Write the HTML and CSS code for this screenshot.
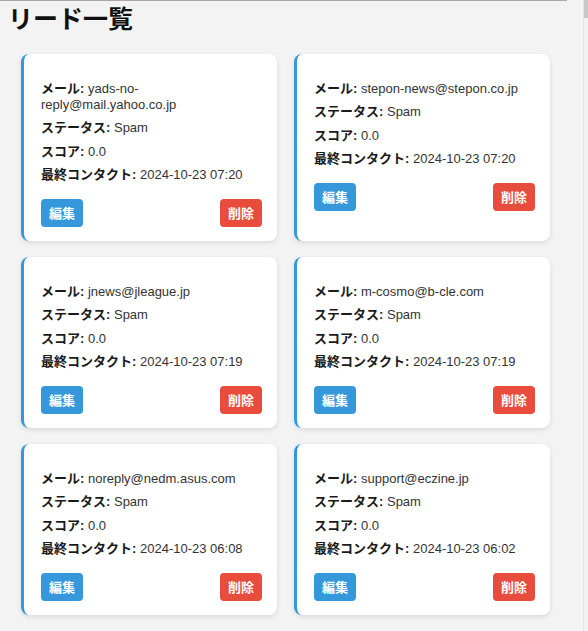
FILE: index.html
```html
<!DOCTYPE html>
<html lang="ja">
<head>
<meta charset="utf-8">
<title>リード一覧</title>
<link rel="stylesheet" href="styles.css">
</head>
<body>
<div class="page">
  <main class="main">
    <div class="top-rule"></div>
    <h1 class="title">リード一覧</h1>
    <div class="grid">
      <div class="card">
        <p><span class="label">メール:</span> yads-no-reply@mail.yahoo.co.jp</p>
        <p><span class="label">ステータス:</span> Spam</p>
        <p><span class="label">スコア:</span> 0.0</p>
        <p><span class="label">最終コンタクト:</span> 2024-10-23 07:20</p>
        <div class="actions"><button class="btn edit">編集</button><button class="btn del">削除</button></div>
      </div>
      <div class="card">
        <p><span class="label">メール:</span> stepon-news@stepon.co.jp</p>
        <p><span class="label">ステータス:</span> Spam</p>
        <p><span class="label">スコア:</span> 0.0</p>
        <p><span class="label">最終コンタクト:</span> 2024-10-23 07:20</p>
        <div class="actions"><button class="btn edit">編集</button><button class="btn del">削除</button></div>
      </div>
      <div class="card">
        <p><span class="label">メール:</span> jnews@jleague.jp</p>
        <p><span class="label">ステータス:</span> Spam</p>
        <p><span class="label">スコア:</span> 0.0</p>
        <p><span class="label">最終コンタクト:</span> 2024-10-23 07:19</p>
        <div class="actions"><button class="btn edit">編集</button><button class="btn del">削除</button></div>
      </div>
      <div class="card">
        <p><span class="label">メール:</span> m-cosmo@b-cle.com</p>
        <p><span class="label">ステータス:</span> Spam</p>
        <p><span class="label">スコア:</span> 0.0</p>
        <p><span class="label">最終コンタクト:</span> 2024-10-23 07:19</p>
        <div class="actions"><button class="btn edit">編集</button><button class="btn del">削除</button></div>
      </div>
      <div class="card">
        <p><span class="label">メール:</span> noreply@nedm.asus.com</p>
        <p><span class="label">ステータス:</span> Spam</p>
        <p><span class="label">スコア:</span> 0.0</p>
        <p><span class="label">最終コンタクト:</span> 2024-10-23 06:08</p>
        <div class="actions"><button class="btn edit">編集</button><button class="btn del">削除</button></div>
      </div>
      <div class="card">
        <p><span class="label">メール:</span> support@eczine.jp</p>
        <p><span class="label">ステータス:</span> Spam</p>
        <p><span class="label">スコア:</span> 0.0</p>
        <p><span class="label">最終コンタクト:</span> 2024-10-23 06:02</p>
        <div class="actions"><button class="btn edit">編集</button><button class="btn del">削除</button></div>
      </div>
    </div>
  </main>
  <div class="scrollbar"><div class="thumb"></div></div>
</div>
</body>
</html>
```

FILE: styles.css
```css
html, body {
  margin: 0;
  padding: 0;
  height: 100%;
  overflow: hidden;
  background: #f3f3f3;
}
body {
  font-family: "Liberation Sans", Arial, "Noto Sans CJK JP", sans-serif;
  color: #333;
}
.page {
  display: flex;
  height: 631px;
}
.main {
  flex: 1;
  min-width: 0;
}
.top-rule {
  width: 567px;
  height: 1px;
  background: #a9a9a9;
}
.title {
  margin: 0 0 0 8px;
  font-family: "Noto Sans CJK JP", sans-serif;
  font-size: 25px;
  font-weight: 700;
  line-height: 32px;
  color: #111;
}
.grid {
  display: grid;
  grid-template-columns: 1fr 1fr;
  gap: 16px 17px;
  margin: 21px 0 0 21px;
  width: 529px;
}
.card {
  background: #fff;
  border-left: 3px solid #3498db;
  border-radius: 8px;
  box-shadow: 0 2px 5px rgba(0, 0, 0, 0.1);
  padding: 19px 15px 14px 17px;
}
.card p {
  margin: 7.5px 0;
  font-size: 13px;
  line-height: 16px;
  color: #333;
}
.label {
  font-weight: 700;
  color: #1a1a1a;
}
.actions {
  display: flex;
  justify-content: space-between;
  margin-top: 16px;
}
.btn {
  border: none;
  border-radius: 4px;
  color: #fff;
  font-family: "Noto Sans CJK JP", sans-serif;
  font-weight: 700;
  font-size: 13px;
  line-height: 16px;
  padding: 6px 8px;
  height: 28px;
  width: 42px;
}
.edit { background: #3498db; }
.del { background: #e74c3c; }
.scrollbar {
  width: 4px;
  border-left: 1px solid #e4e4e4;
  background: #f1f1f1;
}
.thumb {
  height: 18px;
  background: #c8c8c8;
}
```
